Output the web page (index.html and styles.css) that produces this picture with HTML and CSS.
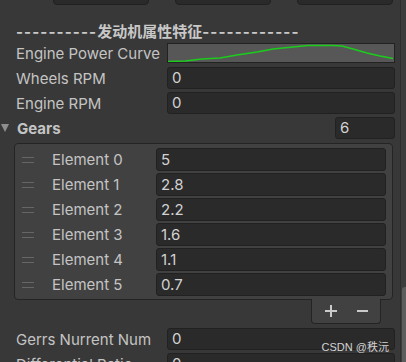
FILE: index.html
```html
<!DOCTYPE html>
<html lang="zh-CN">
<head>
  <meta charset="UTF-8">
  <title>Inspector - Engine</title>
  <link rel="stylesheet" href="styles.css">
</head>
<body>

  <div class="inspector">
    <div class="top-row">
      <div class="slot"></div>
      <div class="slot"></div>
      <div class="slot"></div>
    </div>

    <div class="header"><span class="dash">----------</span>发动机属性特征<span class="dash">------------</span></div>

    <div class="row">
      <span class="label">Engine Power Curve</span>
      <div class="curve">
        <svg width="226" height="18" viewBox="0 0 226 18">
          <polyline points="0,17.5 17,17 34,15 52,14 69,11 89,8 105,5 125,3 140,1.5 165,1.5 174,2 185,5 199,9 212,12 225,14.5"
                    fill="none" stroke="#1ccc1c" stroke-width="1.6"/>
        </svg>
      </div>
    </div>

    <div class="row">
      <span class="label">Wheels RPM</span>
      <div class="field">0</div>
    </div>

    <div class="row">
      <span class="label">Engine RPM</span>
      <div class="field">0</div>
    </div>

    <div class="row foldout">
      <span class="arrow"></span>
      <span class="label bold">Gears</span>
      <div class="field size">6</div>
    </div>

    <div class="list-box">
      <div class="element"><span class="handle"></span><span class="el-label">Element 0</span><div class="field">5</div></div>
      <div class="element"><span class="handle"></span><span class="el-label">Element 1</span><div class="field">2.8</div></div>
      <div class="element"><span class="handle"></span><span class="el-label">Element 2</span><div class="field">2.2</div></div>
      <div class="element"><span class="handle"></span><span class="el-label">Element 3</span><div class="field">1.6</div></div>
      <div class="element"><span class="handle"></span><span class="el-label">Element 4</span><div class="field">1.1</div></div>
      <div class="element"><span class="handle"></span><span class="el-label">Element 5</span><div class="field">0.7</div></div>
    </div>

    <div class="list-footer">
      <div class="buttons">
        <svg width="12" height="12" viewBox="0 0 12 12"><path d="M6 0V12M0 6H12" stroke="#cacaca" stroke-width="2"/></svg>
        <svg width="11" height="12" viewBox="0 0 11 12"><path d="M0 6H11" stroke="#cacaca" stroke-width="2"/></svg>
      </div>
    </div>

    <div class="row gap-top">
      <span class="label">Gerrs Nurrent Num</span>
      <div class="field">0</div>
    </div>

    <div class="row">
      <span class="label">Differential Ratio</span>
      <div class="field">0</div>
    </div>
  </div>

  <div class="scrollbar">
    <div class="thumb"></div>
  </div>

  <div class="watermark">CSDN @秩沅</div>

</body>
</html>
```

FILE: styles.css
```css
* {
  box-sizing: border-box;
  margin: 0;
  padding: 0;
}

body {
  display: flex;
  height: 100vh;
  overflow: hidden;
  background-color: #383838;
  color: #c4c4c4;
  font-family: Inter, "Noto Sans CJK SC", sans-serif;
  font-size: 15px;
}

.inspector {
  flex: 1;
  padding: 0 5px 0 16px;
}

/* partially hidden fields above */
.top-row {
  display: flex;
  height: 5px;
  overflow: hidden;
  padding-left: 37px;
  gap: 26px;
}

.slot {
  width: 96px;
  height: 22px;
  margin-top: -17px;
  flex: none;
  background-color: #2a2a2a;
  border: 1px solid #212121;
  border-radius: 4px;
}

.header {
  margin-top: 17px;
  height: 20px;
  line-height: 20px;
  font-weight: bold;
  color: #c8c8c8;
  white-space: nowrap;
}

.dash {
  letter-spacing: 1.1px;
}

.row {
  display: flex;
  align-items: center;
  height: 22px;
  margin-bottom: 3px;
}

.label {
  width: 151px;
  flex: none;
  white-space: nowrap;
}

.bold {
  font-weight: bold;
  flex: 1;
}

.field {
  flex: 1;
  height: 22px;
  line-height: 20px;
  padding-left: 4px;
  background-color: #2a2a2a;
  border: 1px solid #212121;
  border-radius: 3px;
  color: #d2d2d2;
}

.curve {
  flex: 1;
  height: 20px;
  background-color: #575757;
  border: 1px solid #222;
}

.curve svg {
  display: block;
}

.foldout {
  margin-left: -16px;
}

.arrow {
  width: 17px;
  flex: none;
  height: 10px;
}

.arrow::before {
  content: "";
  display: block;
  margin: 1px 0 0 1px;
  border-left: 4px solid transparent;
  border-right: 4px solid transparent;
  border-top: 8px solid #8e8e8e;
  width: 0;
}

.foldout .label {
  width: auto;
}

.field.size {
  flex: none;
  width: 60px;
}

.list-box {
  margin: 4px 2px 0 -2px;
  padding: 4px 6px 3px 0;
  background-color: #414141;
  border: 1px solid #242424;
  border-radius: 4px;
}

.element {
  display: flex;
  align-items: center;
  height: 23px;
  margin-bottom: 2px;
}

.element:last-child {
  margin-bottom: 0;
}

.element .field {
  height: 23px;
  line-height: 21px;
}

.handle {
  width: 12px;
  height: 6px;
  margin: 0 18px 0 7px;
  flex: none;
  border-top: 1px solid #666;
  border-bottom: 1px solid #666;
}

.el-label {
  width: 104px;
  flex: none;
}

.list-footer {
  display: flex;
  justify-content: flex-end;
  padding-right: 14px;
  margin-top: -1px;
}

.buttons {
  width: 70px;
  height: 25px;
  display: flex;
  align-items: center;
  gap: 20px;
  padding-left: 13px;
  background-color: #414141;
  border: 1px solid #242424;
  border-top: none;
  border-radius: 0 0 4px 4px;
}

.gap-top {
  margin-top: 4px;
}

.scrollbar {
  width: 6px;
  flex: none;
  display: flex;
  flex-direction: column;
  justify-content: flex-end;
  background-color: #3c3c3c;
  border-left: 1px solid #2e2e2e;
}

.thumb {
  height: 75px;
  margin-left: 1px;
  background-color: #5c5c5c;
  border-radius: 3px 0 0 0;
}

.watermark {
  position: absolute;
  right: 17px;
  top: 338px;
  font-size: 11px;
  font-family: "Liberation Sans", "Noto Sans CJK SC", sans-serif;
  color: #d4d4d4;
}
```
